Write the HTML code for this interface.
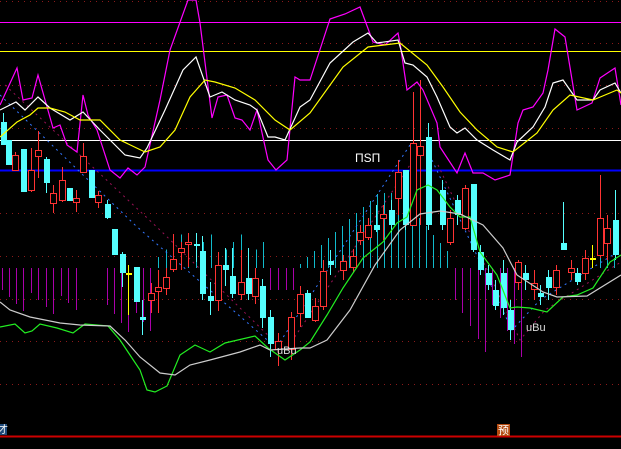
<!DOCTYPE html>
<html><head><meta charset="utf-8"><style>
html,body{margin:0;padding:0;background:#000;width:621px;height:449px;overflow:hidden}
svg{display:block}
</style></head><body>
<svg id="s" width="621" height="449" viewBox="0 0 621 449" xmlns="http://www.w3.org/2000/svg" shape-rendering="crispEdges">
<rect width="621" height="449" fill="#000"/>
<g stroke="#8b1a1a" stroke-dasharray="1,5" stroke-width="1">
<line x1="0" y1="1.5" x2="621" y2="1.5"/><line x1="0" y1="43.5" x2="621" y2="43.5"/>
<line x1="0" y1="85.5" x2="621" y2="85.5"/><line x1="0" y1="128.5" x2="621" y2="128.5"/>
<line x1="0" y1="213.5" x2="621" y2="213.5"/><line x1="0" y1="256.5" x2="621" y2="256.5"/>
<line x1="0" y1="299.5" x2="621" y2="299.5"/><line x1="0" y1="341.5" x2="621" y2="341.5"/>
<line x1="0" y1="384.5" x2="621" y2="384.5"/>
</g>
<line x1="0" y1="22.5" x2="621" y2="22.5" stroke="#ff00ff"/>
<line x1="0" y1="51.5" x2="621" y2="51.5" stroke="#ffff00"/>
<line x1="0" y1="140.5" x2="621" y2="140.5" stroke="#ffffff"/>
<line x1="0" y1="170.5" x2="621" y2="170.5" stroke="#0000ff" stroke-width="2"/>
<line x1="0" y1="436.5" x2="621" y2="436.5" stroke="#cc0000" stroke-width="2"/>
<g id="hist"></g>
<g fill="none" stroke-dasharray="2,4" shape-rendering="auto">
<polyline points="0,95 135,225 273,345" stroke="#3377ff"/>
<polyline points="5,85 160,230 278,345" stroke="#991155"/>
<polyline points="280,342 410,145" stroke="#3377ff"/>
<polyline points="288,347 420,150" stroke="#991155"/>
<polyline points="432,160 512,330 540,300 621,250" stroke="#3377ff"/>
<polyline points="438,165 520,340 545,310 621,262" stroke="#991155"/>
</g>
<g id="cand"></g>
<g fill="none" shape-rendering="auto" stroke-width="1.2">
<polyline stroke="#ff00ff" points="0,105 17,68 23,100 32,98 38,75 53,128 60,125 67,145 77,152 83,95 88,115 97,130 110,170 120,178 128,168 137,175 145,167 160,100 170,50 188,0 196,0 200,23 212,118 218,97 227,95 235,118 242,120 250,130 257,110 268,160 276,170 287,160 295,77 300,80 310,80 330,19 345,14 360,7 373,42 385,45 398,33 400,43 407,90 417,82 423,90 437,123 440,147 457,173 465,153 473,173 483,173 495,180 510,175 518,123 523,110 533,107 543,93 548,70 555,29 565,37 577,110 592,103 600,78 615,68 621,105"/>
<polyline stroke="#ffffff" points="0,110 16,102 25,110 38,97 50,108 70,120 83,112 100,130 110,140 125,155 140,158 147,148 165,110 183,70 196,57 210,97 222,92 235,100 250,105 257,110 268,137 275,137 285,140 300,107 310,100 330,63 353,42 368,33 377,43 398,40 405,63 413,65 427,77 437,97 450,127 457,133 465,128 477,140 493,150 510,160 517,142 533,127 545,107 553,83 563,80 577,100 593,100 600,90 615,83 621,93"/>
<polyline stroke="#ffff00" points="0,137 17,122 30,115 38,108 50,108 65,112 80,120 100,120 120,140 145,152 160,147 175,130 190,97 205,80 215,82 235,88 255,100 275,120 290,130 310,113 343,67 368,47 400,43 427,65 443,87 460,112 477,130 497,147 513,152 537,133 553,110 570,95 593,100 617,90 621,93"/>
<polyline stroke="#22ee22" points="0,327 15,324 25,333 32,331 40,324 57,328 73,333 85,324 108,326 120,340 140,370 147,390 155,392 167,386 180,355 195,345 210,352 225,343 255,336 268,348 285,360 300,350 310,342 327,315 343,288 363,258 383,242 397,223 407,217 417,190 428,185 437,190 450,207 460,217 470,217 480,252 497,275 510,308 517,307 530,308 547,312 563,297 577,295 593,288 610,262 621,255"/>
<polyline stroke="#cccccc" points="0,302 10,310 30,317 60,323 80,325 110,326 125,340 140,357 160,373 175,375 190,365 210,360 240,352 260,345 270,350 300,348 310,348 327,340 350,310 375,265 400,230 420,214 440,211 460,214 483,225 503,248 517,275 543,292 557,297 587,296 621,275"/>
</g>
<g font-family="Liberation Sans, sans-serif" font-size="11" fill="#fff">
<text x="355" y="162" font-size="12">ΠSΠ</text>
<text x="277" y="354" font-size="11" fill="#ddd">uBu</text>
<text x="526" y="331" font-size="11" fill="#ddd">uBu</text>
</g>
<rect x="0" y="424" width="7" height="11" fill="#1e4a7a"/>
<text x="-2" y="433" font-family="Liberation Sans, 'Noto Sans CJK SC', sans-serif" font-size="10" fill="#fff">才</text>
<rect x="497" y="424" width="13" height="12" fill="#b44a10"/>
<text x="498" y="434" font-family="Liberation Sans, 'Noto Sans CJK SC', sans-serif" font-size="11" fill="#fff">预</text>
</svg>
<script>
var NS="http://www.w3.org/2000/svg";
function el(p,t,a){var e=document.createElementNS(NS,t);for(var k in a)e.setAttribute(k,a[k]);p.appendChild(e);return e;}
var h=document.getElementById("hist");
// [x, top, bottom, color]
var H=[];
[2,9,16,23,31,38,46,53,61,68,76].forEach(function(x,i){H.push([x,268,290+((i*7)%25),"#aa00aa"]);});
[107,114,121,128,136,143,150].forEach(function(x,i){H.push([x,268,305+((i*9)%28),"#aa00aa"]);});
for(var x=158;x<=265;x+=7.5){H.push([Math.round(x),233+((x*3)%30),268,"#11bbcc"]);}
[270,278,286,293].forEach(function(x){H.push([x,268,290,"#aa00aa"]);});
for(var x=300;x<=450;x+=7){var t=268-Math.min(75,(x-295)*0.9);if(x>400)t=195+(x-400)*1.2;H.push([x,Math.round(t),268,"#11bbcc"]);}
[455,462,470,478,485,492,500,507,514,521].forEach(function(x,i){H.push([x,268,300+((i*13)%60),"#aa00aa"]);});
[600,607,614].forEach(function(x){H.push([x,258,268,"#11bbcc"]);});
H.forEach(function(b){el(h,"line",{x1:b[0]+.5,y1:b[1],x2:b[0]+.5,y2:b[2],stroke:b[3]});});
var c=document.getElementById("cand");
// [x, bodyTop, bodyBot, wickTop, wickBot, type c=cyan r=red y=yellow]
var C=[[3,122,145,113,145,"c"],[8,140,165,140,165,"c"],[15,155,170,152,170,"r"],[23,149,192,149,192,"c"],[31,170,190,148,192,"r"],[38,150,156,131,178,"r"],[46,159,183,157,193,"c"],[53,193,203,185,213,"r"],[62,180,200,167,202,"r"],[69,188,201,188,201,"c"],[76,198,202,190,212,"r"],[83,156,172,143,172,"r"],[91,170,198,170,198,"c"],[98,195,202,191,208,"r"],[107,204,218,200,219,"c"],[114,229,255,229,255,"c"],[122,254,273,252,287,"c"],[128,273,275,265,315,"y"],[136,267,302,267,302,"c"],[142,317,320,300,335,"c"],[151,293,300,283,313,"r"],[158,287,291,270,313,"r"],[166,277,288,268,295,"r"],[173,259,269,234,272,"r"],[181,248,252,242,270,"r"],[188,242,244,233,267,"r"],[196,244,246,233,262,"c"],[202,251,294,236,300,"c"],[210,296,301,282,315,"c"],[218,265,300,252,311,"r"],[225,265,270,248,286,"c"],[232,276,294,248,298,"c"],[241,282,294,250,300,"r"],[248,278,294,248,300,"c"],[255,278,296,268,304,"r"],[262,286,318,279,328,"c"],[270,317,344,310,357,"c"],[278,341,349,333,366,"r"],[291,317,349,312,360,"r"],[300,294,313,286,327,"r"],[307,293,318,290,318,"c"],[315,306,320,298,322,"r"],[323,271,306,260,310,"r"],[330,261,265,250,275,"c"],[343,261,270,255,280,"r"],[353,256,267,249,273,"r"],[360,232,240,225,245,"r"],[368,225,237,218,240,"r"],[376,225,230,205,232,"c"],[383,214,218,205,240,"r"],[391,210,225,200,232,"c"],[398,172,198,160,215,"r"],[405,170,225,170,230,"c"],[413,143,225,92,225,"r"],[420,146,155,80,225,"r"],[428,137,225,123,230,"c"],[442,190,225,180,230,"c"],[450,218,242,210,245,"r"],[457,200,215,195,225,"c"],[465,188,228,185,230,"r"],[473,184,250,184,252,"c"],[480,252,270,245,275,"c"],[488,273,285,265,290,"c"],[495,290,306,280,310,"c"],[503,273,308,260,315,"c"],[510,310,330,300,340,"c"],[518,262,282,260,290,"r"],[525,273,280,265,290,"c"],[534,283,289,270,300,"r"],[540,293,297,285,305,"c"],[548,277,288,270,300,"c"],[556,270,287,265,295,"r"],[563,243,250,202,243,"c"],[571,268,272,260,280,"r"],[577,273,282,268,285,"c"],[585,258,273,250,280,"r"],[592,258,260,245,268,"y"],[600,218,255,175,258,"r"],[607,228,243,215,260,"r"],[615,220,255,190,260,"c"]];
C.forEach(function(d){var x=d[0],col=d[5]=="c"?"#55ffff":d[5]=="r"?"#ff3333":"#ffff00";
el(c,"line",{x1:x+.5,y1:d[3],x2:x+.5,y2:d[4],stroke:col});
if(d[5]=="r")el(c,"rect",{x:x-2.5,y:d[1]+.5,width:6,height:Math.max(1,d[2]-d[1]),fill:"#000",stroke:col});
else el(c,"rect",{x:x-2,y:d[1],width:6,height:Math.max(1,d[2]-d[1]),fill:col});});
</script>
</body></html>
